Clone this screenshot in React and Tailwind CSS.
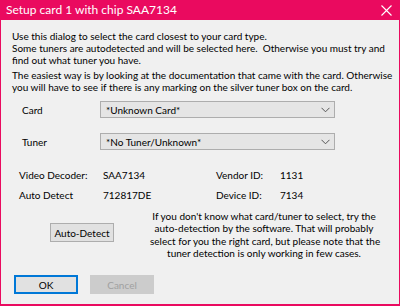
import React from "react";

function Chevron() {
  return (
    <svg width="9" height="6" viewBox="0 0 9 6" className="block">
      <path d="M0.5 0.8 L4.5 4.8 L8.5 0.8" fill="none" stroke="#555" strokeWidth="1" />
    </svg>
  );
}

function Select({ value }) {
  return (
    <div className="w-[235px] h-[17px] bg-[#e5e5e5] border border-[#adadad] flex items-center justify-between pl-[5px] pr-[4px]">
      <span>{value}</span>
      <Chevron />
    </div>
  );
}

export default function App() {
  return (
    <div className="w-[400px] h-[306px] overflow-hidden flex flex-col bg-[#ea0a5f] text-[10px] leading-[12px] text-black whitespace-nowrap" style={{ fontFamily: 'Lato, "Liberation Sans", sans-serif' }}>
      <div className="h-[20px] shrink-0 flex items-center justify-between pl-[6px] pr-[8px] text-white">
        <span className="text-[12px]">Setup card 1 with chip SAA7134</span>
        <svg width="11" height="11" viewBox="0 0 11 11"><path d="M0.5 0.5 L10.5 10.5 M10.5 0.5 L0.5 10.5" stroke="#fff" strokeWidth="1.1" /></svg>
      </div>
      <div className="flex-1 mx-[1px] mb-[2px] bg-[#f0f0f0] flex flex-col pt-[10px] pl-[11px] overflow-hidden">
        <p>Use this dialog to select the card closest to your card type.<br />Some tuners are autodetected and will be selected here.&nbsp; Otherwise you must try and<br />find out what tuner you have.</p>
        <p className="mt-[3px]">The easiest way is by looking at the documentation that came with the card. Otherwise<br />you will have to see if there is any marking on the silver tuner box on the card.</p>
        <div className="mt-[8px] flex items-center">
          <span className="w-[88px] pl-[10px]">Card</span>
          <Select value="*Unknown Card*" />
        </div>
        <div className="mt-[15px] flex items-center">
          <span className="w-[88px] pl-[10px]">Tuner</span>
          <Select value="*No Tuner/Unknown*" />
        </div>
        <div className="mt-[19px] grid grid-cols-[84px_113px_64px_auto] gap-y-[8px] pl-[7px]">
          <span>Video Decoder:</span><span>SAA7134</span><span>Vendor ID:</span><span>1131</span>
          <span>Auto Detect</span><span>712817DE</span><span>Device ID:</span><span>7134</span>
        </div>
        <div className="mt-[9px] flex items-start">
          <div className="w-[138px] flex pl-[38px] pt-[13px]">
            <button className="w-[64px] h-[19px] bg-[#e1e1e1] border border-[#adadad]">Auto-Detect</button>
          </div>
          <p className="w-[228px] text-center leading-[12.3px]">If you don't know what card/tuner to select, try the<br />auto-detection by the software. That will probably<br />select for you the right card, but please note that the<br />tuner detection is only working in few cases.</p>
        </div>
        <div className="mt-[16px] flex gap-[12px] pl-[2px]">
          <button className="w-[64px] h-[19px] bg-[#e1e1e1] border-2 border-[#0078d7]">OK</button>
          <button className="w-[64px] h-[19px] bg-[#cccccc] border border-[#cccccc] text-[#a0a0a0]">Cancel</button>
        </div>
      </div>
    </div>
  );
}
